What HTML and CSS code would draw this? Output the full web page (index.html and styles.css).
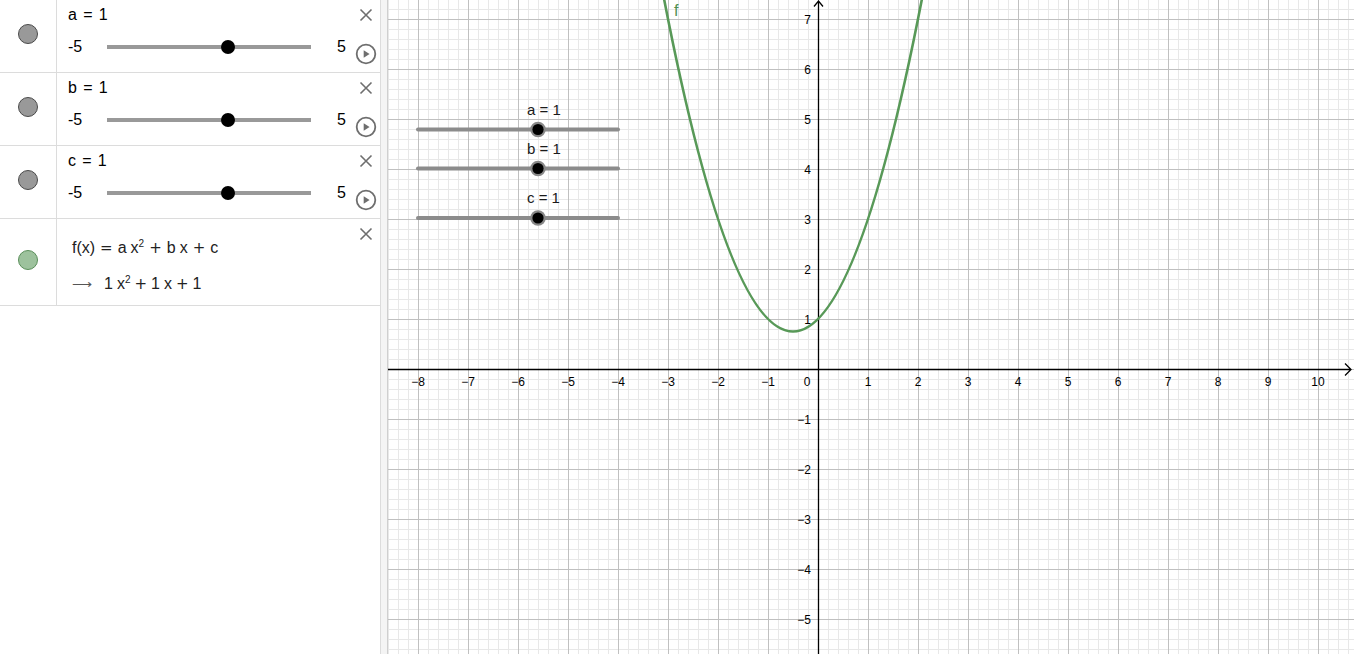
FILE: index.html
```html
<!DOCTYPE html>
<html>
<head>
<meta charset="utf-8">
<link rel="stylesheet" href="styles.css">
</head>
<body>
<div class="app">
  <div class="algebra">
    <div class="row row-slider">
      <div class="marble"><span class="dot dot-gray"></span></div>
      <div class="content">
        <div class="main">
          <div class="title">a = 1</div>
          <div class="slider">
            <span class="min">-5</span>
            <span class="track"><span class="knob"></span></span>
            <span class="max">5</span>
          </div>
        </div>
        <div class="controls">
          <svg class="close" width="14" height="14" viewBox="0 0 14 14"><path d="M1.5 1.5L12.5 12.5M12.5 1.5L1.5 12.5"/></svg>
          <svg class="play" width="22" height="22" viewBox="0 0 22 22"><circle cx="11" cy="11" r="9.3"/><path d="M8.7 7.2L14.6 11L8.7 14.8Z"/></svg>
        </div>
      </div>
    </div>
    <div class="row row-slider">
      <div class="marble"><span class="dot dot-gray"></span></div>
      <div class="content">
        <div class="main">
          <div class="title">b = 1</div>
          <div class="slider">
            <span class="min">-5</span>
            <span class="track"><span class="knob"></span></span>
            <span class="max">5</span>
          </div>
        </div>
        <div class="controls">
          <svg class="close" width="14" height="14" viewBox="0 0 14 14"><path d="M1.5 1.5L12.5 12.5M12.5 1.5L1.5 12.5"/></svg>
          <svg class="play" width="22" height="22" viewBox="0 0 22 22"><circle cx="11" cy="11" r="9.3"/><path d="M8.7 7.2L14.6 11L8.7 14.8Z"/></svg>
        </div>
      </div>
    </div>
    <div class="row row-slider">
      <div class="marble"><span class="dot dot-gray"></span></div>
      <div class="content">
        <div class="main">
          <div class="title">c = 1</div>
          <div class="slider">
            <span class="min">-5</span>
            <span class="track"><span class="knob"></span></span>
            <span class="max">5</span>
          </div>
        </div>
        <div class="controls">
          <svg class="close" width="14" height="14" viewBox="0 0 14 14"><path d="M1.5 1.5L12.5 12.5M12.5 1.5L1.5 12.5"/></svg>
          <svg class="play" width="22" height="22" viewBox="0 0 22 22"><circle cx="11" cy="11" r="9.3"/><path d="M8.7 7.2L14.6 11L8.7 14.8Z"/></svg>
        </div>
      </div>
    </div>
    <div class="row row-func">
      <div class="marble"><span class="dot dot-green"></span></div>
      <div class="content">
        <div class="main">
          <div class="expr">f(x)<span class="op">=</span>a<span class="mul"></span>x<sup>2</sup><span class="op">+</span>b<span class="mul"></span>x<span class="op">+</span>c</div>
          <div class="expr expr2"><span class="arrow">⟶</span>1<span class="mul"></span>x<sup>2</sup><span class="op op2">+</span>1<span class="mul"></span>x<span class="op op2">+</span>1</div>
        </div>
        <div class="controls">
          <svg class="close" width="14" height="14" viewBox="0 0 14 14"><path d="M1.5 1.5L12.5 12.5M12.5 1.5L1.5 12.5"/></svg>
        </div>
      </div>
    </div>
  </div>
  <div class="splitter"></div>
  <div class="graphics">
    <svg class="canvas" width="966" height="654" viewBox="0 0 966 654">
      <defs>
        <pattern id="minor" x="0" y="9" width="10" height="10" patternUnits="userSpaceOnUse">
          <path d="M0.5 0V10M0 0.5H10" stroke="#e8e8e8" stroke-width="1" fill="none"/>
        </pattern>
        <pattern id="major" x="30" y="19" width="50" height="50" patternUnits="userSpaceOnUse">
          <path d="M0.5 0V50M0 0.5H50" stroke="#c0c0c0" stroke-width="1" fill="none"/>
        </pattern>
      </defs>
      <rect width="966" height="654" fill="#fff"/>
      <rect width="966" height="654" fill="url(#minor)"/>
      <rect width="966" height="654" fill="url(#major)"/>
      <g class="axes">
        <path d="M0 369.5H963M957 363.5L963 369.5L957 375.5"/>
        <path d="M430.5 654V1M426 6.5L430.5 1L435 6.5"/>
      </g>
      <g class="xlabels">
        <text x="30" y="386">−8</text>
        <text x="80" y="386">−7</text>
        <text x="130" y="386">−6</text>
        <text x="180" y="386">−5</text>
        <text x="230" y="386">−4</text>
        <text x="280" y="386">−3</text>
        <text x="330" y="386">−2</text>
        <text x="380" y="386">−1</text>
        <text x="419" y="386">0</text>
        <text x="480" y="386">1</text>
        <text x="530" y="386">2</text>
        <text x="580" y="386">3</text>
        <text x="630" y="386">4</text>
        <text x="680" y="386">5</text>
        <text x="730" y="386">6</text>
        <text x="780" y="386">7</text>
        <text x="830" y="386">8</text>
        <text x="880" y="386">9</text>
        <text x="930" y="386">10</text>
      </g>
      <g class="ylabels">
        <text x="423" y="23.5">7</text>
        <text x="423" y="73.5">6</text>
        <text x="423" y="123.5">5</text>
        <text x="423" y="173.5">4</text>
        <text x="423" y="223.5">3</text>
        <text x="423" y="273.5">2</text>
        <text x="423" y="323.5">1</text>
        <text x="423" y="423.5">−1</text>
        <text x="423" y="473.5">−2</text>
        <text x="423" y="523.5">−3</text>
        <text x="423" y="573.5">−4</text>
        <text x="423" y="623.5">−5</text>
      </g>
      <path class="curve" d="M270 -33Q405 696 540 -33"/>
      <text class="flabel" x="286" y="16">f</text>
      <g class="gslider">
        <text x="139" y="114.5">a = 1</text>
        <path d="M30 129.5H230"/>
        <circle class="ring" cx="150" cy="129.5" r="7.8"/>
        <circle class="pt" cx="150" cy="129.5" r="5.6"/>
      </g>
      <g class="gslider">
        <text x="139" y="153.5">b = 1</text>
        <path d="M30 168.5H230"/>
        <circle class="ring" cx="150" cy="168.5" r="7.8"/>
        <circle class="pt" cx="150" cy="168.5" r="5.6"/>
      </g>
      <g class="gslider">
        <text x="139" y="203">c = 1</text>
        <path d="M30 218H230"/>
        <circle class="ring" cx="150" cy="218" r="7.8"/>
        <circle class="pt" cx="150" cy="218" r="5.6"/>
      </g>
    </svg>
  </div>
</div>
</body>
</html>
```

FILE: styles.css
```css
html, body {
  margin: 0;
  padding: 0;
  background: #fff;
  overflow: hidden;
}
body {
  font-family: "Liberation Sans", Arial, sans-serif;
  color: #000;
}
.app {
  display: flex;
  width: 1354px;
  height: 654px;
}
.algebra {
  width: 381px;
  flex: none;
  box-sizing: border-box;
  border-right: 1px solid #dcdcdc;
  background: #fff;
}
.splitter {
  width: 6px;
  flex: none;
  background: #f4f4f4;
  border-right: 1px solid #cfcfcf;
}
.graphics {
  flex: 1;
  overflow: hidden;
}
.canvas {
  display: block;
}

.row {
  display: flex;
  border-bottom: 1px solid #dcdcdc;
}
.row-slider { height: 72px; }
.row-func { height: 86px; }

.marble {
  width: 56px;
  flex: none;
  border-right: 1px solid #dcdcdc;
  display: flex;
  justify-content: center;
  align-items: flex-start;
}
.row-slider .marble { padding-top: 24px; }
.row-func .marble { padding-top: 31px; }

.dot {
  width: 18px;
  height: 18px;
  border-radius: 50%;
  display: block;
}
.dot-gray {
  background: #999;
  border: 1px solid #4a4a4a;
}
.dot-green {
  background: #9dc29d;
  border: 1px solid #5b8f5b;
}

.content {
  flex: 1;
  display: flex;
  padding-left: 11px;
  padding-right: 3px;
}
.main {
  flex: 1;
}
.title {
  font-size: 16px;
  line-height: 20px;
  padding-top: 5px;
  letter-spacing: 0.4px;
  word-spacing: 1px;
}
.slider {
  display: flex;
  align-items: center;
  height: 20px;
  margin-top: 12px;
  font-size: 16px;
}
.min {
  width: 39px;
  flex: none;
}
.track {
  position: relative;
  width: 204px;
  height: 4px;
  background: #999;
  flex: none;
}
.knob {
  position: absolute;
  left: 114px;
  top: -5px;
  width: 14px;
  height: 14px;
  border-radius: 50%;
  background: #000;
}
.max {
  margin-left: 26px;
}

.controls {
  width: 22px;
  flex: none;
  display: flex;
  flex-direction: column;
  align-items: center;
}
.close {
  margin-top: 8px;
  display: block;
}
.close path {
  stroke: #6e6e6e;
  stroke-width: 1.6;
  fill: none;
}
.play {
  margin-top: 21px;
  display: block;
}
.play circle {
  fill: none;
  stroke: #6e6e6e;
  stroke-width: 1.8;
}
.play path {
  fill: #6e6e6e;
}

.expr {
  font-size: 16px;
  line-height: 20px;
  padding-top: 19px;
  padding-left: 4px;
  color: #222;
  white-space: nowrap;
}
.expr sup {
  font-size: 10px;
  line-height: 0;
  vertical-align: 6px;
}
.expr2 {
  padding-top: 16px;
}
.op {
  display: inline-block;
  font-family: "DejaVu Sans", sans-serif;
  font-size: 15px;
  margin: 0 5px;
}
.op2 {
  margin: 0 4px;
}
.mul {
  display: inline-block;
  width: 4px;
}
.arrow {
  display: inline-block;
  width: 32px;
  font-size: 14px;
  color: #555;
}

.axes path {
  stroke: #000;
  stroke-width: 1.3;
  fill: none;
}
.xlabels text, .ylabels text {
  font-family: "Liberation Sans", Arial, sans-serif;
  font-size: 12px;
  fill: #000;
}
.xlabels text { text-anchor: middle; }
.ylabels text { text-anchor: end; }
.curve {
  fill: none;
  stroke: #589958;
  stroke-width: 2.6;
}
.flabel {
  font-family: "Liberation Sans", Arial, sans-serif;
  font-size: 16px;
  fill: #4f8f4f;
}
.gslider text {
  font-family: "Liberation Sans", Arial, sans-serif;
  font-size: 15px;
  fill: #1a1a1a;
}
.gslider path {
  stroke: #8c8c8c;
  stroke-width: 4;
  stroke-linecap: round;
  fill: none;
}
.gslider .ring {
  fill: #888;
}
.gslider .pt {
  fill: #000;
}
```
